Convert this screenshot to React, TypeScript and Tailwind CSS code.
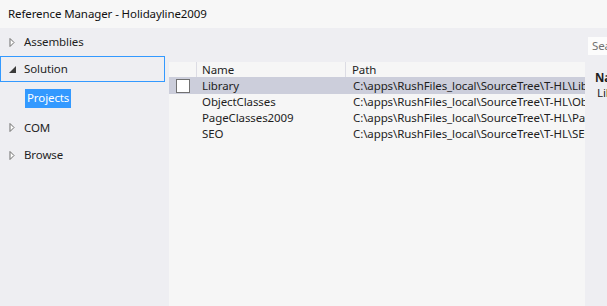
const rows = ['Library', 'ObjectClasses', 'PageClasses2009', 'SEO'];
const basePath = 'C:\\apps\\RushFiles_local\\SourceTree\\T-HL\\';

function Closed() {
  return (
    <svg width="6" height="9" viewBox="0 0 6 9" className="shrink-0">
      <path d="M1 0.5 L5 4.5 L1 8.5 Z" fill="#ffffff" stroke="#6d6d6d" strokeWidth="1" />
    </svg>
  );
}

function Open() {
  return (
    <svg width="7" height="7" viewBox="0 0 7 7" className="shrink-0">
      <path d="M7 0 L7 7 L0 7 Z" fill="#3a3a3a" />
    </svg>
  );
}

export default function App() {
  return (
    <div className="w-[607px] h-[306px] flex flex-col overflow-hidden text-[11.5px] tracking-[-0.1px] text-[#1e1e1e] bg-[#eeeef2]" style={{ fontFamily: '"Noto Sans", "Segoe UI", sans-serif' }}>
      <div className="h-[28px] shrink-0 bg-[#f7f7f7] flex items-center px-[8px] text-[#111]">
        Reference Manager - Holidayline2009
      </div>
      <div className="flex flex-1 min-h-0">
        <div className="w-[169px] shrink-0 flex flex-col">
          <div className="h-[28px] flex items-center gap-[9px] pl-[9px]">
            <Closed />
            <span>Assemblies</span>
          </div>
          <div className="h-[26px] w-[165px] border border-[#3399ff] flex items-center gap-[8px] pl-[8px]">
            <Open />
            <span>Solution</span>
          </div>
          <div className="h-[32px] flex items-center pl-[25px]">
            <span className="bg-[#3399ff] text-white h-[19px] px-[2px] flex items-center">Projects</span>
          </div>
          <div className="h-[27px] flex items-center gap-[9px] pl-[9px]">
            <Closed />
            <span>COM</span>
          </div>
          <div className="h-[28px] flex items-center gap-[9px] pl-[9px]">
            <Closed />
            <span>Browse</span>
          </div>
        </div>
        <div className="w-[416px] shrink-0 flex flex-col">
          <div className="h-[34px] shrink-0" />
          <div className="flex-1 bg-[#f6f6f6] overflow-hidden">
            <div className="h-[16px] flex border-b border-[#cccedb] leading-[16px]">
              <div className="w-[28px] shrink-0 border-r border-[#dcdce4]" />
              <div className="w-[149px] shrink-0 border-r border-[#dcdce4] pl-[5px]">Name</div>
              <div className="flex-1 pl-[6px]">Path</div>
            </div>
            {rows.map((r, i) => (
              <div key={r} className={`h-[16px] flex items-center leading-[16px] ${i === 0 ? 'bg-[#cccedb]' : ''}`}>
                <div className="w-[28px] shrink-0 flex items-center pl-[7px]">
                  {i === 0 && <div className="w-[14px] h-[14px] bg-white border border-[#717171]" />}
                </div>
                <div className="w-[149px] shrink-0 pl-[5px]">{r}</div>
                <div className="flex-1 min-w-0 pl-[7px] whitespace-nowrap overflow-hidden">{basePath + r}</div>
              </div>
            ))}
          </div>
        </div>
        <div className="flex-1 min-w-0 flex flex-col pt-[9px] pl-[3px] overflow-hidden whitespace-nowrap">
          <div className="h-[18px] bg-[#fcfcfc] text-[#717171] pl-[4px] leading-[18px] overflow-hidden">Search</div>
          <div className="pl-[7px] mt-[15px] font-bold leading-[15px] text-[#1e1e1e] overflow-hidden">Name:</div>
          <div className="pl-[9px] leading-[15px] text-[#1e1e1e] overflow-hidden">Library</div>
        </div>
      </div>
    </div>
  );
}
